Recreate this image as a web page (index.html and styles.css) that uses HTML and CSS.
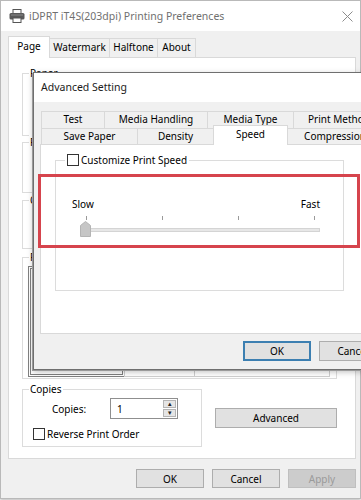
FILE: index.html
```html
<!DOCTYPE html>
<html lang="en">
<head>
    <meta charset="UTF-8">
    <title>Printing Preferences</title>
    <link rel="stylesheet" href="styles.css">
</head>
<body>
    <div class="window">
        <div class="titlebar">
            <svg class="app-icon" width="16" height="14" viewBox="0 0 16 14">
                <rect x="4" y="0.5" width="8" height="4" fill="#fff" stroke="#555"/>
                <rect x="0.5" y="4" width="15" height="6.5" rx="1.5" fill="#5a5a5a"/>
                <rect x="2" y="5.5" width="12" height="1" fill="#8a8a8a"/>
                <rect x="4" y="9" width="8" height="4.5" fill="#fff" stroke="#555"/>
            </svg>
            <span class="title">iDPRT iT4S(203dpi) Printing Preferences</span>
            <svg class="close" width="11" height="11" viewBox="0 0 11 11">
                <path d="M0.5 0.5 L10.5 10.5 M10.5 0.5 L0.5 10.5" stroke="#8c8c8c" stroke-width="1"/>
            </svg>
        </div>
        <div class="client">
            <div class="tabs">
                <div class="tab active" style="width:42px">Page</div>
                <div class="tab" style="width:61px">Watermark</div>
                <div class="tab" style="width:49px">Halftone</div>
                <div class="tab" style="width:39px">About</div>
            </div>
            <div class="panel">
                <div class="group g-paper"><span class="legend">Paper</span></div>
                <div class="group g-size"><span class="legend">Paper Size</span></div>
                <div class="group g-orient"><span class="legend">Orientation</span></div>
                <div class="group g-preview">
                    <span class="legend">Preview</span>
                    <div class="panes">
                        <div class="pane pane-main"></div>
                        <div class="pane pane-mid"></div>
                        <div class="pane pane-right"></div>
                    </div>
                </div>
                <div class="lower">
                    <div class="group g-copies">
                        <span class="legend">Copies</span>
                        <div class="copies-row">
                            <span class="copies-label">Copies:</span>
                            <div class="spin">
                                <span class="spin-value">1</span>
                                <div class="spin-buttons">
                                    <div class="spin-btn">&#9652;</div>
                                    <div class="spin-btn">&#9662;</div>
                                </div>
                            </div>
                        </div>
                        <label class="check-row">
                            <span class="checkbox"></span>
                            <span>Reverse Print Order</span>
                        </label>
                    </div>
                    <button class="btn btn-advanced">Advanced</button>
                </div>
            </div>
            <div class="buttons">
                <button class="btn">OK</button>
                <button class="btn">Cancel</button>
                <button class="btn disabled">Apply</button>
            </div>
        </div>
    </div>

    <div class="dialog">
        <div class="dlg-title">Advanced Setting</div>
        <div class="dlg-body">
            <div class="trow back">
                <div class="dtab" style="width:64px">Test</div>
                <div class="dtab" style="width:104px">Media Handling</div>
                <div class="dtab" style="width:87px">Media Type</div>
                <div class="dtab" style="width:92px">Print Method</div>
            </div>
            <div class="trow front">
                <div class="dtab" style="width:97px">Save Paper</div>
                <div class="dtab" style="width:77px">Density</div>
                <div class="dtab active" style="width:75px">Speed</div>
                <div class="dtab" style="width:96px">Compression</div>
            </div>
            <div class="dlg-panel">
                <div class="group speed-group">
                    <label class="legend check-legend">
                        <span class="checkbox"></span>
                        <span>Customize Print Speed</span>
                    </label>
                    <div class="slider">
                        <div class="slider-labels">
                            <span>Slow</span>
                            <span>Fast</span>
                        </div>
                        <div class="ticks">
                            <span class="tick"></span>
                            <span class="tick"></span>
                            <span class="tick"></span>
                            <span class="tick"></span>
                        </div>
                        <div class="track">
                            <svg class="thumb" width="11" height="16" viewBox="0 0 11 16">
                                <path d="M0.5 4.5 L5.5 0.5 L10.5 4.5 L10.5 15.5 L0.5 15.5 Z" fill="#c6c6c6" stroke="#b4b4b4"/>
                            </svg>
                        </div>
                    </div>
                </div>
            </div>
            <div class="dlg-buttons">
                <button class="btn default">OK</button>
                <button class="btn">Cancel</button>
            </div>
        </div>
        <div class="highlight"></div>
    </div>
</body>
</html>
```

FILE: styles.css
```css
html, body {
    margin: 0;
    width: 361px;
    height: 500px;
    overflow: hidden;
    background: #fff;
}

body {
    position: relative;
    font-family: "Noto Sans", "Open Sans", sans-serif;
    font-size: 10px;
    color: #000;
}

.window {
    box-sizing: border-box;
    width: 361px;
    height: 499px;
    border: 1px solid #b9b9b9;
    background: #f0f0f0;
    box-shadow: 0 1px 3px rgba(0, 0, 0, 0.3);
}

.titlebar {
    height: 30px;
    background: #fff;
    display: flex;
    align-items: center;
    padding-left: 8px;
}

.app-icon {
    margin-right: 4px;
}

.title {
    font-size: 10.5px;
    color: #707070;
    flex-grow: 1;
}

.close {
    margin-right: 7px;
}

.client {
    padding: 0 4px 0 7px;
}

.tabs {
    display: flex;
    align-items: flex-end;
    margin-top: 5px;
    margin-bottom: -1px;
    height: 22px;
    position: relative;
    z-index: 1;
}

.tab {
    box-sizing: border-box;
    height: 20px;
    border: 1px solid #d9d9d9;
    background: #f0f0f0;
    text-align: center;
    line-height: 17px;
    margin-left: -1px;
}

.tab.active {
    height: 22px;
    margin-left: 0;
    background: #fff;
    border-bottom: none;
    line-height: 19px;
}

.panel {
    box-sizing: border-box;
    width: 348px;
    background: #fff;
    border: 1px solid #d9d9d9;
    padding: 15px 0 11px 13px;
}

.group {
    box-sizing: border-box;
    border: 1px solid #dcdcdc;
    width: 315px;
}

.legend {
    display: block;
    width: fit-content;
    margin: -8px 0 0 6px;
    padding: 0 1px;
    line-height: 14px;
    background: #fff;
}

.g-paper { height: 63px; }
.g-size { height: 51px; margin-top: 6px; }
.g-orient { height: 49px; margin-top: 7px; }
.g-preview { height: 122px; margin-top: 8px; }

.panes {
    display: flex;
    margin: 2px 0 0 5px;
    height: 111px;
}

.pane {
    box-sizing: border-box;
    height: 100%;
    border: 1px solid #cfcfcf;
}

.pane-main {
    width: 97px;
    border: 3px double #808080;
}

.pane-mid {
    width: 71px;
    margin-left: -1px;
}

.pane-right {
    width: 136px;
    margin-left: -1px;
}

.lower {
    display: flex;
    align-items: flex-start;
    margin-top: 10px;
}

.g-copies {
    width: 180px;
    height: 58px;
}

.copies-row {
    display: flex;
    align-items: center;
    margin: 2px 0 0 29px;
}

.copies-label {
    width: 58px;
}

.spin {
    box-sizing: border-box;
    width: 68px;
    height: 21px;
    border: 1px solid #8f8f8f;
    display: flex;
    align-items: center;
    justify-content: space-between;
    padding: 0 1px 0 6px;
}

.spin-buttons {
    display: flex;
    flex-direction: column;
    gap: 1px;
}

.spin-btn {
    width: 13px;
    height: 8px;
    background: #e5e5e5;
    border: 1px solid #b4b4b4;
    box-sizing: border-box;
    font-size: 7px;
    line-height: 6px;
    text-align: center;
    color: #222;
}

.check-row {
    display: flex;
    align-items: center;
    margin: 8px 0 0 10px;
}

.checkbox {
    box-sizing: border-box;
    display: inline-block;
    width: 12px;
    height: 12px;
    border: 1px solid #333;
    background: #fff;
    margin-right: 2px;
}

.btn {
    box-sizing: border-box;
    font-family: "Noto Sans", "Open Sans", sans-serif;
    font-size: 10px;
    height: 19px;
    width: 68px;
    padding: 0;
    background: #e1e1e1;
    border: 1px solid #adadad;
    color: #000;
}

.btn-advanced {
    width: 122px;
    height: 20px;
    margin: 19px 0 0 13px;
}

.buttons {
    display: flex;
    justify-content: flex-end;
    gap: 8px;
    margin-top: 10px;
}

.btn.disabled {
    background: #cccccc;
    border-color: #bfbfbf;
    color: #9a9a9a;
}

/* dialog window on top of the preferences */
.dialog {
    position: absolute;
    left: 33px;
    top: 72px;
    width: 420px;
    height: 298px;
    box-sizing: border-box;
    border: 1px solid #6f6f6f;
    background: #f0f0f0;
    box-shadow: -1px 1px 0 #9a9a9a, 0 2px 6px rgba(0, 0, 0, 0.25);
}

.dlg-title {
    height: 29px;
    background: #fff;
    padding-left: 7px;
    line-height: 29px;
    font-size: 10.5px;
    color: #1a1a1a;
}

.dlg-body {
    padding: 9px 0 0 6px;
}

.trow {
    display: flex;
    align-items: flex-end;
    margin-left: 1px;
}

.dtab {
    box-sizing: border-box;
    flex-shrink: 0;
    border: 1px solid #d9d9d9;
    background: #f0f0f0;
    text-align: center;
    margin-left: -1px;
}

.dtab:first-child {
    margin-left: 0;
}

.trow.back .dtab {
    height: 17px;
    border-bottom: none;
    line-height: 15px;
}

.trow.front {
    height: 20px;
    margin-top: -3px;
    margin-bottom: -1px;
    position: relative;
    z-index: 1;
}

.trow.front .dtab {
    height: 17px;
    line-height: 14px;
}

.trow.front .dtab.active {
    height: 20px;
    background: #fff;
    border-bottom: none;
    line-height: 16px;
}

.dlg-panel {
    box-sizing: border-box;
    height: 190px;
    background: #fff;
    border: 1px solid #d9d9d9;
    padding: 15px 0 0 14px;
}

.speed-group {
    width: 289px;
    height: 131px;
}

.check-legend {
    display: flex;
    align-items: center;
    margin-left: 9px;
    padding: 0 2px;
}

.slider {
    width: 250px;
    margin: 30px 0 0 16px;
}

.slider-labels {
    display: flex;
    justify-content: space-between;
    line-height: 14px;
    padding-right: 2px;
}

.ticks {
    display: flex;
    justify-content: space-between;
    margin: 5px 0 0 14px;
    width: 229px;
}

.tick {
    width: 1px;
    height: 4px;
    background: #9a9a9a;
}

.track {
    position: relative;
    box-sizing: border-box;
    margin: 8px 0 0 14px;
    width: 234px;
    height: 4px;
    background: #e7e7e7;
    border: 1px solid #d4d4d4;
}

.thumb {
    position: absolute;
    left: -7px;
    top: -8px;
}

.dlg-buttons {
    display: flex;
    gap: 8px;
    margin: 7px 0 0 203px;
}

.dlg-buttons .btn {
    height: 20px;
}

.btn.default {
    border: 2px solid #3c7fb1;
}

.highlight {
    position: absolute;
    left: 4px;
    top: 101px;
    width: 322px;
    height: 74px;
    box-sizing: border-box;
    border: 3px solid #d6444d;
}
```
